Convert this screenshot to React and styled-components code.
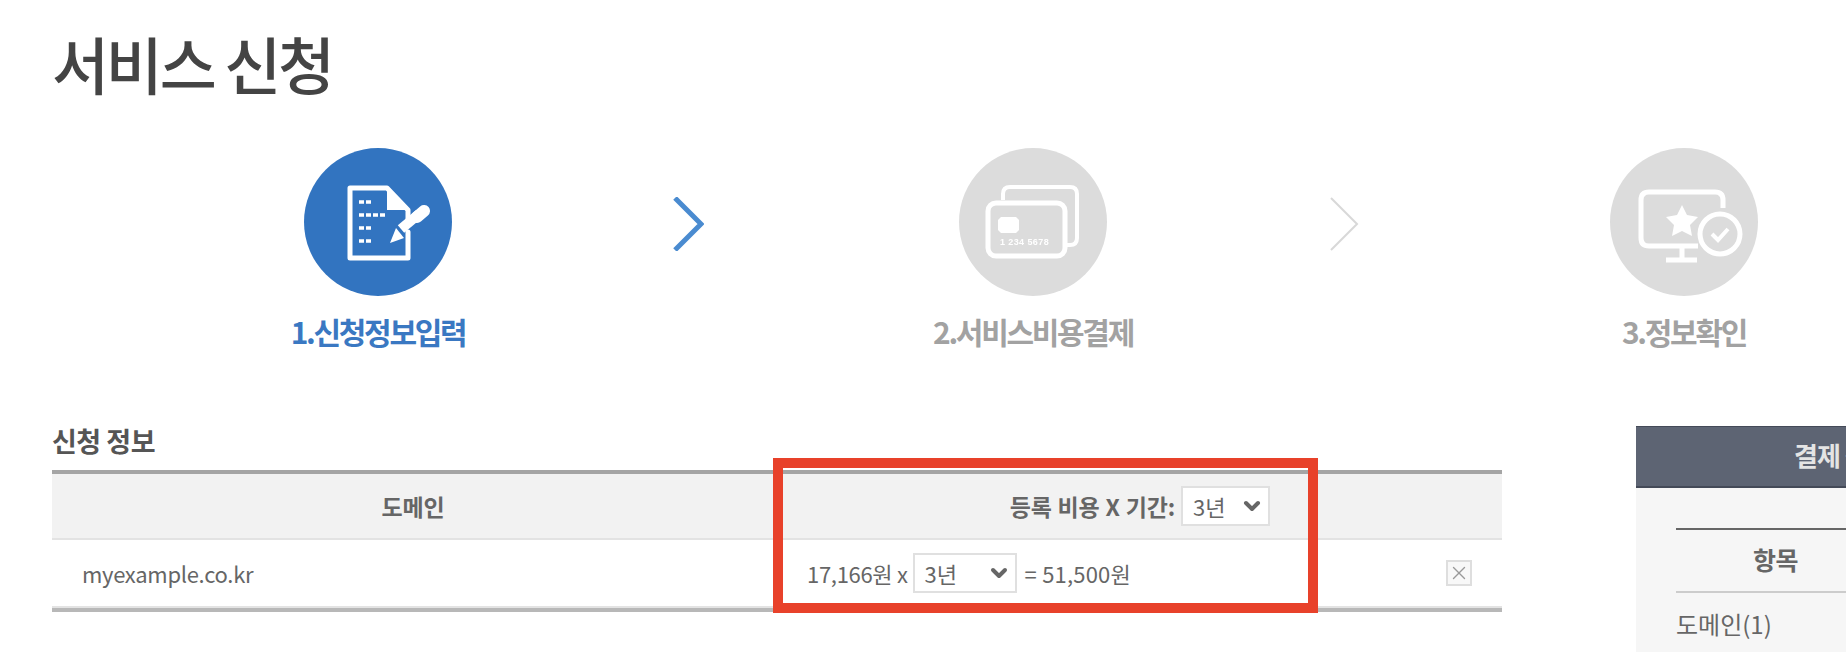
import { Fragment } from "react";
import styled, { createGlobalStyle } from "styled-components";
import { ChevronDown, X } from "lucide-react";

const GlobalStyle = createGlobalStyle`
  html, body {
    margin: 0;
    height: 652px;
    overflow: hidden;
    background: #fff;
  }
  * {
    box-sizing: border-box;
  }
`;

const Page = styled.div`
  width: 1846px;
  height: 652px;
  overflow: hidden;
  padding: 22px 0 0 52px;
  color: #666;
  font-family: "Noto Sans CJK KR", "Noto Sans", sans-serif;
`;

const Title = styled.h1`
  margin: 0;
  height: 78px;
  font-size: 62px;
  line-height: 82px;
  font-weight: 500;
  letter-spacing: -3.2px;
  color: #444;
`;

const Stepper = styled.div`
  display: grid;
  grid-template-columns: 300px 355px 300px 351px 300px;
  margin: 48px 0 0 176px;
`;

const Step = styled.div`
  display: flex;
  flex-direction: column;
  align-items: center;
`;

const Circle = styled.div`
  width: 148px;
  height: 148px;
  border-radius: 50%;
  background: ${(p) => (p.$active ? "#3274c0" : "#dcdcdc")};

  svg {
    display: block;
    filter: blur(0.5px);
  }
`;

const StepLabel = styled.div`
  margin-top: 13px;
  font-size: 30px;
  line-height: 44px;
  font-weight: 700;
  letter-spacing: -2.3px;
  white-space: nowrap;
  color: ${(p) => (p.$active ? "#3a78c2" : "#a2a2a2")};
`;

const Arrow = styled.svg`
  width: 31px;
  height: 54px;
  margin: 49px 0 0 ${(p) => p.$offset}px;
`;

const Columns = styled.div`
  display: flex;
  gap: 134px;
  margin-top: 70px;
`;

const Main = styled.section`
  flex: 0 0 1450px;
`;

const SectionTitle = styled.h2`
  margin: 0;
  height: 47px;
  font-size: 27px;
  line-height: 36px;
  font-weight: 700;
  letter-spacing: -0.5px;
  color: #555;
`;

const Table = styled.div`
  position: relative;
  border-top: 4px solid #a5a5a5;
  border-bottom: 4px solid #b8b8b8;
`;

const Row = styled.div`
  display: grid;
  grid-template-columns: 722px 1fr;
  align-items: center;
  height: ${(p) => p.$height}px;
  background: ${(p) => (p.$head ? "#f2f2f2" : "#fff")};
  border-bottom: 2px solid #e3e3e3;
`;

const HeadCell = styled.div`
  display: flex;
  align-items: center;
  justify-content: ${(p) => (p.$end ? "flex-end" : "center")};
  padding-right: ${(p) => (p.$end ? "232px" : "0")};
  gap: 6px;
  font-size: 23px;
  font-weight: 700;
  letter-spacing: -0.2px;
  word-spacing: 1px;
  color: #666;
`;

const Cell = styled.div`
  display: flex;
  align-items: center;
  padding-left: ${(p) => p.$left}px;
  font-size: 22px;
  letter-spacing: -0.3px;
  color: #666;
`;

const Total = styled.span`
  letter-spacing: 0.2px;
`;

const Select = styled.div`
  display: flex;
  align-items: center;
  justify-content: space-between;
  flex: none;
  width: ${(p) => p.$width}px;
  height: 40px;
  margin: ${(p) => p.$margin};
  padding: 0 4px 0 10px;
  background: #fff;
  border: 2px solid #e0e0e0;
  font-size: 22px;
  font-weight: 400;
  letter-spacing: 0;
  color: #666;
`;

const RemoveButton = styled.button`
  display: flex;
  align-items: center;
  justify-content: center;
  width: 26px;
  height: 26px;
  margin: 0 30px 0 auto;
  padding: 0;
  background: #f8f8f8;
  border: 2px solid #dedede;
  color: #999;
`;

const Highlight = styled.div`
  position: absolute;
  left: 721px;
  top: -16px;
  width: 545px;
  height: 155px;
  border: 10px solid #e8412a;
  pointer-events: none;
`;

const Panel = styled.aside`
  flex: 0 0 400px;
  height: 300px;
  margin-top: 3px;
  background: #f6f6f6;
`;

const PanelHead = styled.div`
  height: 62px;
  background: #5d6473;
  border-top: 1px solid #444a58;
  border-bottom: 2px solid #444a58;
  padding-left: 158px;
  font-size: 26px;
  line-height: 56px;
  font-weight: 700;
  letter-spacing: -1px;
  color: #e4e4e4;
  white-space: nowrap;
`;

const PanelBody = styled.div`
  margin: 40px 0 0 40px;
  width: 320px;
`;

const PanelHeadRow = styled.div`
  height: 65px;
  border-top: 2px solid #666;
  border-bottom: 2px solid #ccc;
  padding-left: 77px;
  font-size: 25px;
  line-height: 58px;
  font-weight: 700;
  letter-spacing: -0.5px;
  color: #666;
`;

const PanelRow = styled.div`
  height: 62px;
  font-size: 24px;
  line-height: 62px;
  color: #666;
`;

function DocIcon() {
  return (
    <svg width="148" height="148" viewBox="0 0 148 148" fill="none" stroke="#fff">
      <path d="M104 84V110H46V40H83L104 62V72" strokeWidth="5" strokeLinejoin="round" strokeLinecap="round" />
      <path d="M83 40L105 62H83Z" fill="#fff" stroke="none" />
      <path d="M55 54h5M62 54h5M55 67h5M62 67h5M69 67h5M76 67h5M55 80h5M62 80h5M55 93h5M62 93h5" strokeWidth="3.5" />
      <path d="M97 81L115 66" strokeWidth="10" />
      <path d="M113 69L120 63" strokeWidth="12" strokeLinecap="round" />
      <path d="M86 95L92 80L100 90Z" fill="#fff" stroke="none" />
    </svg>
  );
}

function CardIcon() {
  return (
    <svg width="148" height="148" viewBox="0 0 148 148" fill="none" stroke="#fff">
      <path d="M44 52V46Q44 39 51 39H111Q118 39 118 46V90Q118 97 111 97H107" strokeWidth="4" />
      <rect x="29" y="55" width="77" height="53" rx="8" strokeWidth="5" />
      <path d="M42 69H57L60 72V82L57 85H42L39 82V72Z" fill="#fff" stroke="none" />
      <text x="41" y="97" fill="#fff" stroke="none" fontSize="9" fontWeight="700" fontFamily="Liberation Sans, sans-serif" letterSpacing="0.4">
        1 234 5678
      </text>
    </svg>
  );
}

function MonitorIcon() {
  return (
    <svg width="148" height="148" viewBox="0 0 148 148" fill="none" stroke="#fff">
      <path d="M113 60V52Q113 44 105 44H39Q31 44 31 52V90Q31 98 39 98H88" strokeWidth="5" />
      <path d="M72 98V110M56 112H87" strokeWidth="5" />
      <path d="M72 57L77 67L88 69L80 77L82 88L72 83L62 88L64 77L56 69L67 67Z" fill="#fff" stroke="none" />
      <circle cx="110" cy="86" r="20" strokeWidth="5" />
      <path d="M102 86L108 92L118 81" strokeWidth="4" />
    </svg>
  );
}

const steps = [
  { label: "1.신청정보입력", icon: <DocIcon />, active: true, offset: 145 },
  { label: "2.서비스비용결제", icon: <CardIcon />, offset: 145 },
  { label: "3.정보확인", icon: <MonitorIcon /> },
];

export default function App() {
  return (
    <Page>
      <GlobalStyle />
      <Title>서비스 신청</Title>

      <Stepper>
        {steps.map((step) => (
          <Fragment key={step.label}>
            <Step>
              <Circle $active={step.active}>{step.icon}</Circle>
              <StepLabel $active={step.active}>{step.label}</StepLabel>
            </Step>
            {step.offset && (
              <Arrow $offset={step.offset} viewBox="0 0 31 54" fill="none">
                <path
                  d={step.active ? "M2 1L28 27L2 53" : "M3 1L29 27L3 53"}
                  stroke={step.active ? "#4a8bd0" : "#d8d8d8"}
                  strokeWidth={step.active ? 5 : 2}
                />
              </Arrow>
            )}
          </Fragment>
        ))}
      </Stepper>

      <Columns>
        <Main>
          <SectionTitle>신청 정보</SectionTitle>
          <Table>
            <Row $head $height={66}>
              <HeadCell>도메인</HeadCell>
              <HeadCell $end>
                등록 비용 X 기간:
                <Select $width={89}>
                  3년
                  <ChevronDown size={24} strokeWidth={4} />
                </Select>
              </HeadCell>
            </Row>
            <Row $height={68}>
              <Cell $left={30}>myexample.co.kr</Cell>
              <Cell $left={33}>
                17,166원 x
                <Select $width={104} $margin="0 8px 0 5px">
                  3년
                  <ChevronDown size={24} strokeWidth={4} />
                </Select>
                <Total>= 51,500원</Total>
                <RemoveButton>
                  <X size={22} strokeWidth={1.5} />
                </RemoveButton>
              </Cell>
            </Row>
            <Highlight />
          </Table>
        </Main>

        <Panel>
          <PanelHead>결제 정보</PanelHead>
          <PanelBody>
            <PanelHeadRow>항목</PanelHeadRow>
            <PanelRow>도메인(1)</PanelRow>
          </PanelBody>
        </Panel>
      </Columns>
    </Page>
  );
}
